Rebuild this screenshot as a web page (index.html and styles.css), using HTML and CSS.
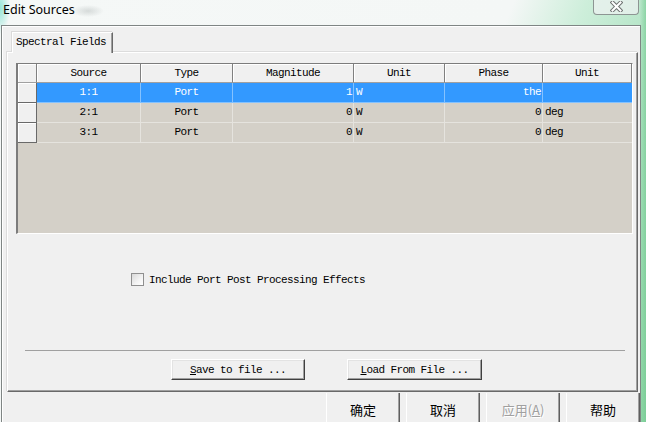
FILE: index.html
```html
<!DOCTYPE html>
<html lang="en">
<head>
  <meta charset="UTF-8" />
  <title>Edit Sources</title>
  <link rel="stylesheet" href="styles.css">
</head>
<body>
<div class="titlebar">
  <span class="title">Edit Sources</span>
  <span class="close">
    <svg width="13" height="11" viewBox="0 0 13 11">
      <path d="M2.5 1.5 L10.5 9.5 M10.5 1.5 L2.5 9.5" stroke="#6d7170" stroke-width="4" stroke-linecap="square" fill="none"/>
      <path d="M2.5 1.5 L10.5 9.5 M10.5 1.5 L2.5 9.5" stroke="#fff" stroke-width="2" stroke-linecap="square" fill="none"/>
    </svg>
  </span>
</div>

<div class="dialog">
  <!-- Tabs -->
  <div class="tabs">
    <div class="tab">Spectral Fields</div>
  </div>

  <div class="panel">
    <!-- Sources grid -->
    <div class="grid">
      <div class="row head">
        <div class="cell corner"></div>
        <div class="cell">Source</div>
        <div class="cell">Type</div>
        <div class="cell">Magnitude</div>
        <div class="cell">Unit</div>
        <div class="cell">Phase</div>
        <div class="cell">Unit</div>
      </div>
      <div class="row selected">
        <div class="cell rowhead"></div>
        <div class="cell center">1:1</div>
        <div class="cell center">Port</div>
        <div class="cell right">1</div>
        <div class="cell left">W</div>
        <div class="cell right">the</div>
        <div class="cell left"></div>
      </div>
      <div class="row">
        <div class="cell rowhead"></div>
        <div class="cell center">2:1</div>
        <div class="cell center">Port</div>
        <div class="cell right">0</div>
        <div class="cell left">W</div>
        <div class="cell right">0</div>
        <div class="cell left">deg</div>
      </div>
      <div class="row">
        <div class="cell rowhead"></div>
        <div class="cell center">3:1</div>
        <div class="cell center">Port</div>
        <div class="cell right">0</div>
        <div class="cell left">W</div>
        <div class="cell right">0</div>
        <div class="cell left">deg</div>
      </div>
    </div>

    <label class="check"><span class="box"></span>Include Port Post Processing Effects</label>

    <div class="sep"></div>

    <div class="file-buttons">
      <button class="btn save"><u>S</u>ave to file ...</button>
      <button class="btn load"><u>L</u>oad From File ...</button>
    </div>
  </div>

  <!-- Dialog buttons -->
  <div class="dlg-buttons">
    <button class="dbtn">确定</button>
    <button class="dbtn">取消</button>
    <button class="dbtn" disabled>应用(<u>A</u>)</button>
    <button class="dbtn">帮助</button>
  </div>
</div>
</body>
</html>
```

FILE: styles.css
```css
body {
  margin: 0;
  width: 646px;
  height: 422px;
  overflow: hidden;
  background:
    radial-gradient(ellipse 10px 26px at 0 8px, rgba(70, 215, 190, 0.55), transparent),
    radial-gradient(ellipse 16px 6px at 88px 11px, rgba(120, 130, 130, 0.25), transparent),
    linear-gradient(90deg, transparent 0, transparent 99%, rgba(110, 200, 140, 0.6) 100%),
    linear-gradient(112deg, #f5f8f7 0, #f4f7f6 63%, #cdeeda 72%, #ade2c1 84%, #90d6a8 100%);
}
.titlebar {
  height: 25px;
  display: flex;
}
.title {
  font-family: "Noto Sans", sans-serif;
  font-size: 12.5px;
  line-height: 18px;
  padding: 1px 0 0 3px;
  color: #000;
}
.close {
  margin-left: auto;
  margin-right: 7px;
  width: 46px;
  height: 15px;
  box-sizing: border-box;
  border: 1px solid #8d9593;
  border-top: none;
  border-radius: 0 0 4px 4px;
  background: rgba(236, 242, 240, 0.75);
  display: flex;
  align-items: center;
  justify-content: center;
}
.close svg {
  margin-top: -2px;
}

.dialog {
  margin-left: 1px;
  width: 640px;
  height: 397px;
  box-sizing: border-box;
  border: 1px solid #7f8584;
  border-bottom: none;
  background: #f0f0f0;
  box-shadow: inset 1px 1px 0 #fff;
  font-family: "Liberation Mono", monospace;
  font-size: 11px;
  letter-spacing: -0.6px;
  color: #000;
}
.tabs {
  display: flex;
  padding: 6px 0 0 10px;
}
.tab {
  position: relative;
  z-index: 1;
  height: 21px;
  box-sizing: border-box;
  margin-bottom: -1px;
  padding: 0 6px 0 3px;
  line-height: 19px;
  background: #f0f0f0;
  border-top: 1px solid #fff;
  border-left: 1px solid #fff;
  border-right: 1px solid #696969;
  box-shadow: -1px -1px 0 #dadada, inset -1px 0 0 #a0a0a0;
}

.panel {
  margin-left: 5px;
  width: 631px;
  height: 340px;
  box-sizing: border-box;
  border: 1px solid;
  border-color: #fff #696969 #696969 #fff;
  box-shadow: inset -1px -1px 0 #a0a0a0, -1px -1px 0 #dcdcdc;
  display: flex;
  flex-direction: column;
}

/* grid */
.grid {
  margin: 10px 0 0 8px;
  width: 617px;
  height: 171px;
  box-sizing: border-box;
  border-style: solid;
  border-width: 1px 1px 1px 2px;
  border-color: #7c7c7c #fff #fff #7c7c7c;
  background: #d4d0c8;
}
.row {
  display: grid;
  grid-template-columns: 19px 104px 92px 121px 91px 98px 89px;
  height: 20px;
}
.row.head {
  height: 19px;
}
.cell {
  box-sizing: border-box;
  border-right: 1px solid rgba(255, 255, 255, 0.4);
  border-bottom: 1px solid rgba(255, 255, 255, 0.4);
  line-height: 19px;
  white-space: nowrap;
  overflow: hidden;
}
.cell:last-child {
  border-right: none;
}
.head .cell {
  background: #f0f0f0;
  text-align: center;
  line-height: 18px;
  border-right: 1px solid #808080;
  border-bottom: 1px solid #a0a0a0;
  box-shadow: inset 1px 1px 0 #fff;
}
.head .cell:last-child {
  border-right: 1px solid #808080;
}
.cell.rowhead {
  background: #f0f0f0;
  border-right: 1px solid #696969;
  border-bottom: 1px solid #696969;
  box-shadow: inset 1px 1px 0 #fff;
}
.center { text-align: center; }
.right { text-align: right; padding-right: 1px; }
.left { padding-left: 2px; }
.row.selected .cell {
  background: #3399ff;
  color: #fff;
}
.row.selected .cell.rowhead {
  background: #f0f0f0;
}

/* checkbox */
.check {
  display: flex;
  align-items: center;
  margin: 39px 0 0 123px;
  height: 13px;
}
.box {
  width: 13px;
  height: 13px;
  box-sizing: border-box;
  border: 1px solid #8f8f8f;
  background: linear-gradient(135deg, #d8d8d8, #f4f4f4 60%, #fff);
  margin-right: 5px;
}

.sep {
  margin: 64px 0 0 17px;
  width: 600px;
  height: 1px;
  background: #a0a0a0;
}

.file-buttons {
  display: flex;
  gap: 42px;
  margin: 8px 0 0 163px;
}
.btn {
  height: 21px;
  padding: 0;
  font: inherit;
  letter-spacing: inherit;
  color: #000;
  background: #f0f0f0;
  border: 1px solid;
  border-color: #fff #404040 #404040 #fff;
  box-shadow: inset -1px -1px 0 #a0a0a0, inset 1px 1px 0 #e3e3e3;
}
.btn.save { width: 134px; }
.btn.load { width: 135px; }

/* dialog buttons */
.dlg-buttons {
  display: flex;
  justify-content: flex-end;
  gap: 6px;
  margin-top: 1px;
}
.dbtn {
  width: 74px;
  height: 32px;
  padding: 0;
  background: #f0f0f0;
  border: none;
  border-left: 1px solid #fff;
  border-right: 1px solid #5f5f5f;
  box-shadow: inset -1px 0 0 #a0a0a0;
  font-family: "Noto Sans CJK SC", sans-serif;
  font-size: 13px;
  letter-spacing: 0;
  color: #000;
}
.dbtn:disabled {
  color: #a0a0a0;
  text-shadow: 1px 1px 0 #fff;
}
```
